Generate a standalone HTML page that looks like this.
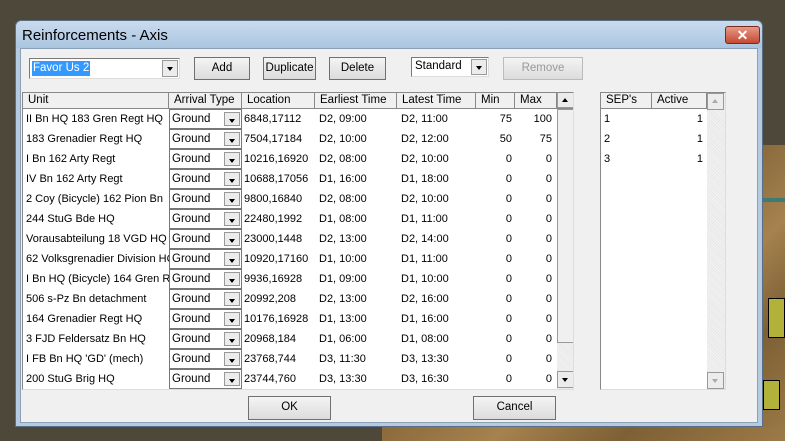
<!DOCTYPE html>
<html><head><style>
*{box-sizing:border-box;margin:0;padding:0}
body{width:785px;height:441px;overflow:hidden;background:#4d4839;position:relative;font-family:"Liberation Sans",sans-serif;font-size:11px;color:#000}
.map{position:absolute;background:linear-gradient(135deg,#8a6a3c,#a5824f 30%,#7d6035 60%,#9c7a48);}
.win{position:absolute;left:15px;top:20px;width:748px;height:407px;background:#b4cbe2;border:1px solid #5a6e84;border-radius:6px 6px 0 0}
.title{position:absolute;left:0;top:0;right:0;height:27px;background:linear-gradient(#c9dbee,#aac5e0);border-radius:6px 6px 0 0;font-size:15px;padding:6px 0 0 6px;color:#000}
.client{position:absolute;left:4px;top:27px;width:738px;height:375px;background:#f0f0f0;border:1px solid #8ca0b5}
.close{position:absolute;left:709px;top:5px;width:35px;height:18px;background:linear-gradient(#e59a88,#c64a32);border:1px solid #7a2b1e;border-radius:3px;color:#fff;text-align:center;font-size:14px;font-weight:bold;line-height:16px}
.a{position:absolute}
.btn{position:absolute;background:linear-gradient(#f4f4f4,#dcdcdc);border:1px solid #707070;text-align:center;font-size:11.5px;line-height:20px}
.combo{position:absolute;background:#fff;border:1px solid #7a7a7a;border-right-color:#ddd;border-bottom-color:#ddd;font-size:11.5px}
.dd{position:absolute;right:1px;top:1px;bottom:1px;width:16px;background:#ececec;border:1px solid #999}
.dd:after{content:"";position:absolute;left:4px;top:6px;border:3.5px solid transparent;border-top:4px solid #000;border-bottom:0}
.tbl{position:absolute;background:#fff;border:1px solid #888;border-right-color:#ddd;border-bottom-color:#ddd}
.hd{position:absolute;top:0;height:16px;background:#f0f0f0;border-right:1px solid #888;border-bottom:1px solid #888;font-size:11.5px;line-height:15px;padding-left:5px;white-space:nowrap}
.cell{position:absolute;height:20px;line-height:20px;font-size:11px;white-space:nowrap;overflow:hidden}
.r{text-align:right}
.gc{position:absolute;height:20px;border:1px solid #777;background:#fff;font-size:11.5px;line-height:18px;padding-left:2px}
.gc .dd{top:2px;bottom:2px;width:16px}
.sb{position:absolute;background:repeating-linear-gradient(45deg,#f4f4f4 0 1px,#e6e6e6 1px 2px)}
.sbb{position:absolute;width:17px;height:17px;background:#ececec;border:1px solid #999}
.up:after{content:"";position:absolute;left:4px;top:5px;border:3.5px solid transparent;border-bottom:4px solid #000;border-top:0}
.dn:after{content:"";position:absolute;left:4px;top:6px;border:3.5px solid transparent;border-top:4px solid #000;border-bottom:0}
.g:after{border-top-color:#aaa;border-bottom-color:#aaa}
</style></head><body>
<div class="map" style="left:763px;top:145px;width:22px;height:296px"></div>
<div class="map" style="left:382px;top:427px;width:403px;height:14px"></div>
<div class="a" style="left:763px;top:198px;width:22px;height:4px;background:#3d7a78"></div>
<div class="a" style="left:768px;top:298px;width:17px;height:40px;background:#b2b23a;border:1px solid #000"></div>
<div class="a" style="left:763px;top:380px;width:17px;height:30px;background:#b2b23a;border:1px solid #000"></div>
<div class="win">
<div class="title">Reinforcements - Axis</div>
<div class="close">✕</div>
<div class="client">
<div class="combo" style="left:8px;top:9px;width:151px;height:21px"><span style="position:absolute;left:2px;top:2px;background:#3399ff;color:#fff;padding:0 1px;line-height:15px">Favor Us 2</span><div class="dd"></div></div>
<div class="btn" style="left:173px;top:8px;width:56px;height:23px">Add</div>
<div class="btn" style="left:242px;top:8px;width:53px;height:23px">Duplicate</div>
<div class="btn" style="left:308px;top:8px;width:57px;height:23px">Delete</div>
<div class="combo" style="left:390px;top:8px;width:78px;height:20px"><span style="position:absolute;left:3px;top:2px">Standard</span><div class="dd"></div></div>
<div class="btn" style="left:482px;top:8px;width:80px;height:23px;color:#999;border-color:#bbb">Remove</div>

<div class="tbl" style="left:1px;top:43px;width:552px;height:298px;overflow:hidden" id="t"></div>
<div class="tbl" style="left:579px;top:43px;width:126px;height:298px;overflow:hidden" id="s"></div>

<div class="btn" style="left:227px;top:347px;width:83px;height:24px">OK</div>
<div class="btn" style="left:452px;top:347px;width:83px;height:24px">Cancel</div>
</div></div>
<script>
var rows=[["II Bn HQ 183 Gren Regt HQ","6848,17112","D2, 09:00","D2, 11:00","75","100"],
["183 Grenadier Regt HQ","7504,17184","D2, 10:00","D2, 12:00","50","75"],
["I Bn 162 Arty Regt","10216,16920","D2, 08:00","D2, 10:00","0","0"],
["IV Bn 162 Arty Regt","10688,17056","D1, 16:00","D1, 18:00","0","0"],
["2 Coy (Bicycle) 162 Pion Bn","9800,16840","D2, 08:00","D2, 10:00","0","0"],
["244 StuG Bde HQ","22480,1992","D1, 08:00","D1, 11:00","0","0"],
["Vorausabteilung 18 VGD HQ","23000,1448","D2, 13:00","D2, 14:00","0","0"],
["62 Volksgrenadier Division HQ","10920,17160","D1, 10:00","D1, 11:00","0","0"],
["I Bn HQ (Bicycle) 164 Gren Regt","9936,16928","D1, 09:00","D1, 10:00","0","0"],
["506 s-Pz Bn detachment","20992,208","D2, 13:00","D2, 16:00","0","0"],
["164 Grenadier Regt HQ","10176,16928","D1, 13:00","D1, 16:00","0","0"],
["3 FJD Feldersatz Bn HQ","20968,184","D1, 06:00","D1, 08:00","0","0"],
["I FB Bn HQ 'GD' (mech)","23768,744","D3, 11:30","D3, 13:30","0","0"],
["200 StuG Brig HQ","23744,760","D3, 13:30","D3, 16:30","0","0"]];
var cols=[[0,146,"Unit"],[146,73,"Arrival Type"],[219,73,"Location"],[292,82,"Earliest Time"],[374,79,"Latest Time"],[453,39,"Min"],[492,42,"Max"]];
var h="";
cols.forEach(c=>{h+='<div class="hd" style="left:'+c[0]+'px;width:'+c[1]+'px">'+c[2]+'</div>'});
h+='<div class="hd" style="left:534px;width:17px;padding:0"><div class="sbb up" style="left:0;top:-1px;height:16px;width:17px"></div></div>';
rows.forEach((r,i)=>{var y=16+i*20;
h+='<div class="cell" style="left:3px;top:'+y+'px;width:143px">'+r[0]+'</div>';
h+='<div class="gc" style="left:146px;top:'+y+'px;width:73px">Ground<div class="dd"></div></div>';
h+='<div class="cell" style="left:221px;top:'+y+'px;width:70px">'+r[1]+'</div>';
h+='<div class="cell" style="left:296px;top:'+y+'px">'+r[2]+'</div>';
h+='<div class="cell" style="left:378px;top:'+y+'px">'+r[3]+'</div>';
h+='<div class="cell r" style="left:453px;top:'+y+'px;width:36px">'+r[4]+'</div>';
h+='<div class="cell r" style="left:492px;top:'+y+'px;width:37px">'+r[5]+'</div>';});
h+='<div class="sb" style="left:534px;top:16px;width:17px;height:281px"></div>';
h+='<div class="sbb" style="left:534px;top:16px;height:234px;background:#f0f0f0"></div>';
h+='<div class="sbb dn" style="left:534px;top:278px"></div>';
document.getElementById("t").innerHTML=h;
var s='<div class="hd" style="left:0;width:51px">SEP\'s</div><div class="hd" style="left:51px;width:55px">Active</div>';
s+='<div class="sb" style="left:106px;top:0;width:18px;height:297px"></div>';
s+='<div class="sbb up g" style="left:106px;top:0"></div><div class="sbb dn g" style="left:106px;top:279px"></div>';
[1,2,3].forEach((n,i)=>{var y=16+i*20;s+='<div class="cell" style="left:3px;top:'+y+'px">'+n+'</div><div class="cell r" style="left:60px;top:'+y+'px;width:42px">1</div>'});
document.getElementById("s").innerHTML=s;
</script>
</body></html>
